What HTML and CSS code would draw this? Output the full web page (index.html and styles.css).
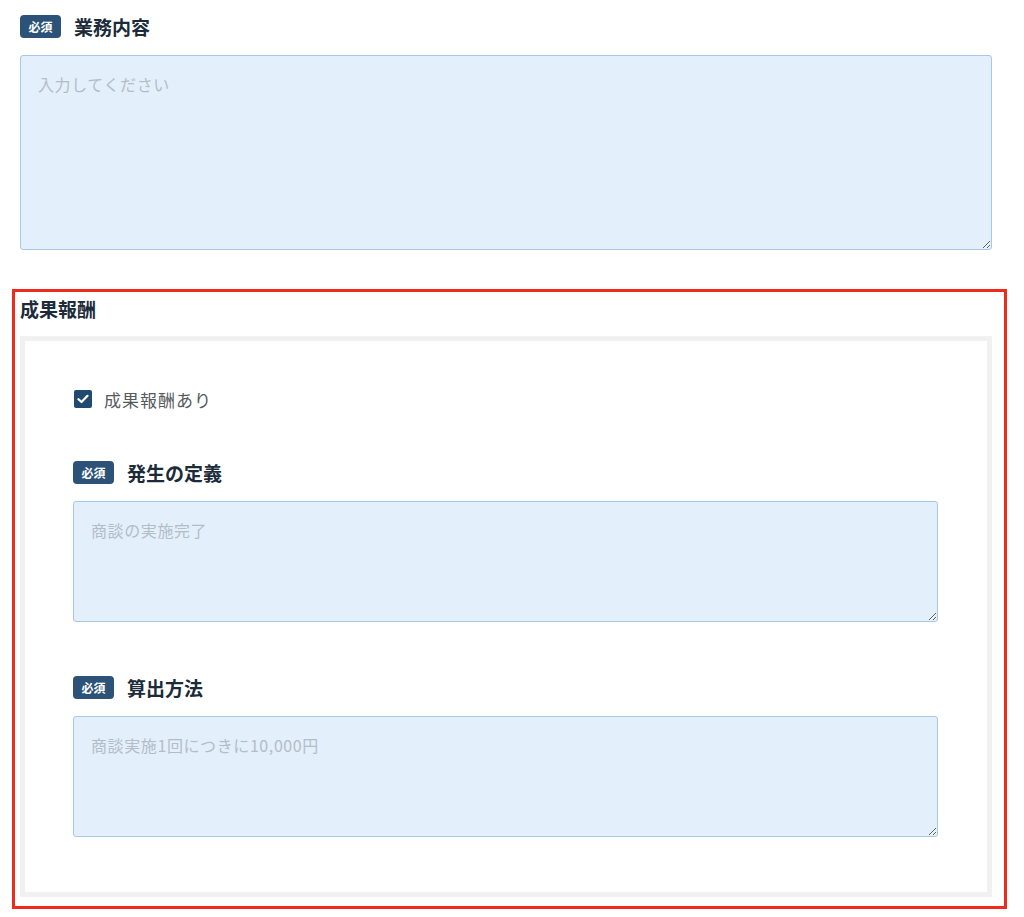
FILE: index.html
```html
<!DOCTYPE html>
<html lang="ja">
<head>
    <meta charset="UTF-8">
    <meta name="viewport" content="width=device-width, initial-scale=1.0">
    <title>業務内容</title>
    <link rel="stylesheet" href="styles.css">
</head>
<body>
    <div class="page">
        <!-- 業務内容 -->
        <div class="field field-top">
            <div class="field-label">
                <span class="badge">必須</span>
                <span class="label-text">業務内容</span>
            </div>
            <textarea class="input input-tall" placeholder="入力してください"></textarea>
        </div>

        <!-- 成果報酬 -->
        <section class="reward">
            <h2 class="reward-title">成果報酬</h2>
            <div class="reward-box">
                <label class="check">
                    <span class="check-box">
                        <svg width="12" height="10" viewBox="0 0 12 10">
                            <path d="M1.5 5.2 L4.5 8 L10.5 1.8" fill="none" stroke="#fff" stroke-width="2.2" stroke-linecap="round" stroke-linejoin="round"/>
                        </svg>
                    </span>
                    <span class="check-text">成果報酬あり</span>
                </label>

                <div class="field field-first">
                    <div class="field-label">
                        <span class="badge">必須</span>
                        <span class="label-text">発生の定義</span>
                    </div>
                    <textarea class="input" placeholder="商談の実施完了"></textarea>
                </div>

                <div class="field field-next">
                    <div class="field-label">
                        <span class="badge">必須</span>
                        <span class="label-text">算出方法</span>
                    </div>
                    <textarea class="input" placeholder="商談実施1回につきに10,000円"></textarea>
                </div>
            </div>
        </section>
    </div>
</body>
</html>
```

FILE: styles.css
```css
body {
    margin: 0;
    background-color: #ffffff;
    font-family: "Noto Sans CJK JP", "Noto Sans", sans-serif;
    color: #1c2b3a;
}

.page {
    width: 972px;
    padding: 15px 0 0 20px;
}

.field {
    display: flex;
    flex-direction: column;
}

.field-label {
    display: flex;
    align-items: center;
    gap: 13px;
    height: 23px;
    margin-bottom: 17px;
}

.badge {
    display: inline-flex;
    align-items: center;
    justify-content: center;
    width: 41px;
    height: 23px;
    background-color: #2c5377;
    color: #ffffff;
    font-size: 12px;
    font-weight: bold;
    border-radius: 4px;
}

.label-text {
    font-size: 19px;
    font-weight: bold;
    color: #1c2b3a;
}

.input {
    box-sizing: border-box;
    width: 100%;
    height: 121px;
    margin: 0;
    padding: 17px 17px;
    background-color: #e3effb;
    border: 1px solid #a8c8e8;
    border-radius: 3px;
    font-family: "Noto Sans CJK JP", "Noto Sans", sans-serif;
    font-size: 16px;
    line-height: 22px;
    letter-spacing: 0.6px;
    color: #333333;
    resize: vertical;
    outline: none;
}

.input::placeholder {
    color: #b3bdc7;
}

.input-tall {
    width: 972px;
    height: 195px;
}

/* === 成果報酬（赤枠） === */
.reward {
    margin: 39px 0 0 -8px;
    width: 972px;
    border: 3px solid #f02a1c;
    padding: 0 12px 9px 5px;
}

.reward-title {
    margin: 0;
    padding-top: 3px;
    height: 41px;
    font-size: 19px;
    font-weight: bold;
    line-height: 28px;
    color: #1c2b3a;
}

.reward-box {
    box-sizing: border-box;
    width: 972px;
    border: 5px solid #f1f1f1;
    padding: 49px 49px 55px 48px;
}

.check {
    display: flex;
    align-items: center;
    gap: 12px;
    height: 18px;
    margin-left: 1px;
}

.check-box {
    display: inline-flex;
    align-items: center;
    justify-content: center;
    width: 18px;
    height: 18px;
    background-color: #204a6f;
    border-radius: 2px;
}

.check-text {
    font-size: 17px;
    color: #555a60;
    letter-spacing: 1px;
}

.field-first {
    margin-top: 53px;
}

.field-next {
    margin-top: 54px;
}
```
